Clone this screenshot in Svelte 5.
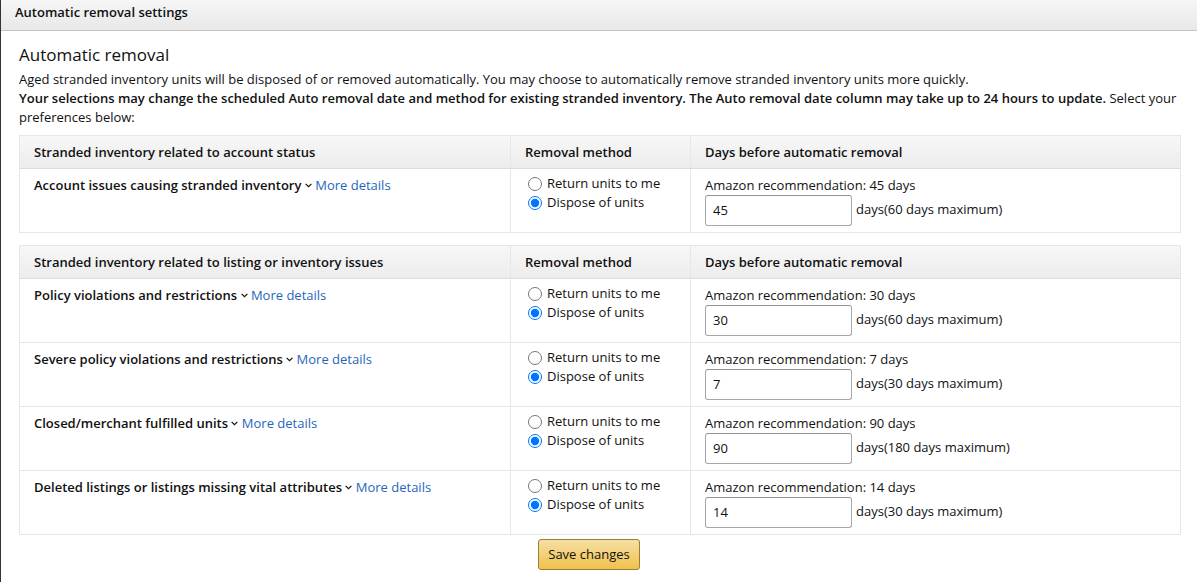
<script>
  const sections = $state([
    {
      title: 'Stranded inventory related to account status',
      rows: [
        { id: 'account', name: 'Account issues causing stranded inventory', recommended: 45, max: 60, days: '45', method: 'dispose' }
      ]
    },
    {
      title: 'Stranded inventory related to listing or inventory issues',
      rows: [
        { id: 'policy', name: 'Policy violations and restrictions', recommended: 30, max: 60, days: '30', method: 'dispose' },
        { id: 'severe', name: 'Severe policy violations and restrictions', recommended: 7, max: 30, days: '7', method: 'dispose' },
        { id: 'closed', name: 'Closed/merchant fulfilled units', recommended: 90, max: 180, days: '90', method: 'dispose' },
        { id: 'deleted', name: 'Deleted listings or listings missing vital attributes', recommended: 14, max: 30, days: '14', method: 'dispose' }
      ]
    }
  ]);
</script>

<div class="panel">
  <header><h1>Automatic removal settings</h1></header>
  <main>
    <h2>Automatic removal</h2>
    <p>Aged stranded inventory units will be disposed of or removed automatically. You may choose to automatically remove stranded inventory units more quickly.</p>
    <p class="notice"><b>Your selections may change the scheduled Auto removal date and method for existing stranded inventory. The Auto removal date column may take up to 24 hours to update.</b> Select your preferences below:</p>
    {#each sections as section}
      <table>
        <thead>
          <tr>
            <th class="issue">{section.title}</th>
            <th class="method">Removal method</th>
            <th>Days before automatic removal</th>
          </tr>
        </thead>
        <tbody>
          {#each section.rows as row}
            <tr>
              <td>
                <b>{row.name}</b>
                <svg class="chevron" viewBox="0 0 7 5" aria-hidden="true"><path d="M0.6 0.8 L3.5 3.7 L6.4 0.8" /></svg>
                <a href="#{row.id}">More details</a>
              </td>
              <td class="choices">
                <label><input type="radio" name={row.id} value="return" bind:group={row.method} />Return units to me</label>
                <label><input type="radio" name={row.id} value="dispose" bind:group={row.method} />Dispose of units</label>
              </td>
              <td class="days">
                <label for="{row.id}-days">Amazon recommendation: {row.recommended} days</label>
                <div class="entry">
                  <input id="{row.id}-days" type="text" bind:value={row.days} />
                  <span>days({row.max} days maximum)</span>
                </div>
              </td>
            </tr>
          {/each}
        </tbody>
      </table>
    {/each}
    <div class="actions"><button type="button">Save changes</button></div>
  </main>
</div>

<style>
  .panel {
    box-sizing: border-box;
    min-height: 100vh;
    border-left: 1px solid #333;
    background: #fff;
    color: #111;
    font: 13px/19px "Open Sans", "Noto Sans", sans-serif;
  }
  header {
    padding: 3px 14px 8px;
    border-bottom: 1px solid #c4c4c4;
    background: linear-gradient(#f6f6f6, #e8e8e8);
  }
  h1 {
    margin: 0;
    font-size: 13px;
    line-height: 19px;
    font-weight: 600;
  }
  b, th { font-weight: 600; }
  main { padding: 12px 16px 12px 18px; }
  h2 {
    margin: 0 0 3px;
    font-size: 17px;
    line-height: 24px;
    font-weight: 400;
  }
  p { margin: 0; }
  .notice { margin-bottom: 8px; }
  table {
    width: 100%;
    margin-bottom: 12px;
    border-collapse: collapse;
    table-layout: fixed;
  }
  table:last-of-type { margin-bottom: 4px; }
  th, td {
    box-sizing: border-box;
    border: 1px solid #e7e7e7;
    text-align: left;
    vertical-align: top;
  }
  th {
    padding: 7px 14px 6px;
    border-bottom-color: #ddd;
  }
  thead tr { background: linear-gradient(#f7f7f7, #ececec); }
  .issue { width: 491px; }
  .method { width: 180px; }
  td { padding: 7px 14px 6px; }
  a { color: #1f66bd; text-decoration: none; }
  a:hover { text-decoration: underline; }
  .chevron {
    width: 7px;
    height: 5px;
    vertical-align: 2px;
    fill: none;
    stroke: #111;
    stroke-width: 1.2;
  }
  .choices { padding-top: 5px; }
  .choices label {
    display: flex;
    align-items: center;
  }
  .choices input {
    width: 14px;
    height: 14px;
    margin: 0 5px 0 3px;
    accent-color: #0075ff;
  }
  .days label { display: block; }
  .entry {
    display: flex;
    align-items: center;
    gap: 4px;
  }
  .entry input {
    box-sizing: border-box;
    width: 147px;
    height: 31px;
    padding: 3px 7px 4px;
    border: 1px solid #a6a6a6;
    border-top-color: #949494;
    border-radius: 3px;
    background: #fff;
    color: #111;
    font: inherit;
  }
  .entry span { padding-bottom: 2px; }
  .actions { text-align: center; padding-right: 22px; }
  button {
    height: 31px;
    padding: 0 9px;
    border: 1px solid #9c7e31;
    border-radius: 3px;
    background: linear-gradient(#f7dfa5, #f0c14b);
    color: #111;
    font: inherit;
  }
</style>
